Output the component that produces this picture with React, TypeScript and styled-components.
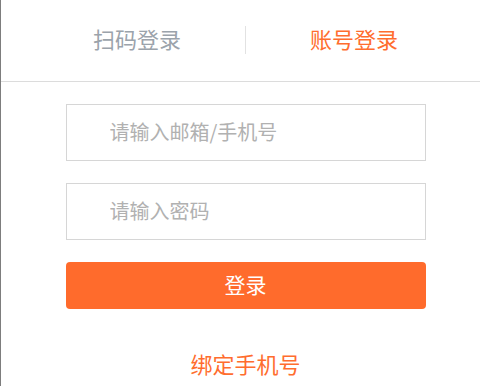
import styled, { createGlobalStyle } from "styled-components";

const GlobalStyle = createGlobalStyle`
  html, body {
    margin: 0;
    padding: 0;
    background: #fff;
  }
  body {
    font-family: "Noto Sans CJK SC", "Noto Sans", "Liberation Sans", sans-serif;
  }
`;

const Panel = styled.div`
  width: 480px;
  height: 386px;
  box-sizing: border-box;
  border-left: 1px solid #7d7d7d;
  background: #fff;
  overflow: hidden;
`;

const TabBar = styled.div`
  height: 81px;
  box-sizing: content-box;
  border-bottom: 1px solid #dcdcdc;
  display: flex;
  justify-content: center;
  align-items: center;
  padding-left: 10px;
`;

const Tab = styled.div<{ $active?: boolean }>`
  width: 216px;
  text-align: center;
  font-size: 22px;
  line-height: 30px;
  margin-top: -5px;
  color: ${(p) => (p.$active ? "#ff6d2e" : "#9ba3ab")};
  cursor: pointer;
`;

const Divider = styled.div`
  width: 1px;
  height: 28px;
  margin-top: -2px;
  background: #e2e2e2;
`;

const Form = styled.div`
  display: flex;
  flex-direction: column;
  align-items: center;
  padding: 22px 0 0 10px;
  gap: 22px;
`;

const Field = styled.input`
  width: 360px;
  height: 57px;
  box-sizing: border-box;
  border: 1px solid #d6d6d6;
  outline: none;
  padding: 0 0 2px 43px;
  font-family: inherit;
  font-size: 20px;
  color: #333;
  background: #fff;

  &::placeholder {
    color: #b1b1b1;
  }
`;

const SubmitButton = styled.button`
  width: 360px;
  height: 47px;
  border: none;
  border-radius: 4px;
  background: #ff6b2c;
  color: #fff;
  font-family: inherit;
  font-size: 21px;
  padding: 0 0 3px;
  cursor: pointer;
`;

const BindLink = styled.a`
  margin-top: 17px;
  font-size: 22px;
  line-height: 30px;
  color: #ff6d2e;
  text-decoration: none;
  cursor: pointer;
`;

const App = () => {
  return (
    <Panel>
      <GlobalStyle />
      <TabBar>
        <Tab>扫码登录</Tab>
        <Divider />
        <Tab $active>账号登录</Tab>
      </TabBar>
      <Form>
        <Field type="text" placeholder="请输入邮箱/手机号" />
        <Field type="password" placeholder="请输入密码" />
        <SubmitButton>登录</SubmitButton>
        <BindLink>绑定手机号</BindLink>
      </Form>
    </Panel>
  );
};

export default App;
